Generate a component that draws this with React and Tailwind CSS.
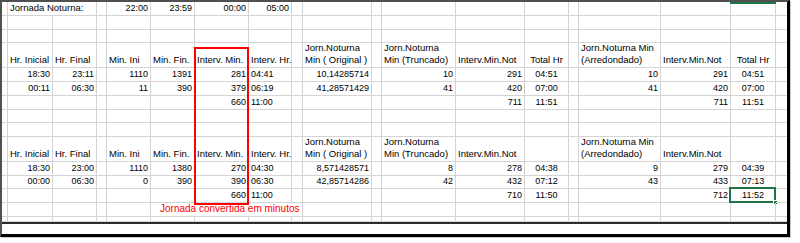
import React from 'react';

// column widths in px, gridline included: A..R, S takes the rest
const COLS =
  'grid-cols-[6px_45px_44px_10px_44px_44px_54px_43px_11px_69px_10px_74px_69px_44px_10px_82px_70px_45px_1fr]';
const ROWS_TPL =
  'grid-rows-[14px_14px_13px_25px_14px_14px_14px_13px_14px_25px_14px_13px_14px_14px_1fr]';

const L = 'l';
const R = 'r';
const C = 'c';

const header = (withTotal) => [
  [1, 'Hr. Inicial', L],
  [2, 'Hr. Final', L],
  [4, 'Min. Ini', L],
  [5, 'Min. Fin.', L],
  [6, 'Interv. Min.', L],
  [7, 'Interv. Hr.', L],
  [9, 'Jorn.Noturna\nMin ( Original )', L],
  [11, 'Jorn.Noturna\nMin (Truncado)', L],
  [12, 'Interv.Min.Not', L],
  ...(withTotal ? [[13, 'Total Hr', C]] : []),
  [15, 'Jorn.Noturna Min\n(Arredondado)', L],
  [16, 'Interv.Min.Not', L],
  ...(withTotal ? [[17, 'Total Hr', C]] : []),
];

const DATA_COLS = [1, 2, 4, 5, 6, 7, 9, 11, 12, 13, 15, 16, 17];
const DATA_ALIGN = { 7: L, 13: C, 17: C };
const dataRow = (vals) =>
  vals
    .map((t, i) => [DATA_COLS[i], t, DATA_ALIGN[DATA_COLS[i]] || R])
    .filter((c) => c[1] !== '');

const ROWS = [
  { cells: [[1, 'Jornada Noturna:', L, 2, true], [4, '22:00', R], [5, '23:59', R], [6, '00:00', R], [7, '05:00', R]] },
  { cells: [] },
  { cells: [] },
  { head: true, cells: header(true) },
  { cells: dataRow(['18:30', '23:11', '1110', '1391', '281', '04:41', '10,14285714', '10', '291', '04:51', '10', '291', '04:51']) },
  { cells: dataRow(['00:11', '06:30', '11', '390', '379', '06:19', '41,28571429', '41', '420', '07:00', '41', '420', '07:00']) },
  { cells: dataRow(['', '', '', '', '660', '11:00', '', '', '711', '11:51', '', '711', '11:51']) },
  { cells: [] },
  { cells: [] },
  { head: true, cells: header(false) },
  { cells: dataRow(['18:30', '23:00', '1110', '1380', '270', '04:30', '8,571428571', '8', '278', '04:38', '9', '279', '04:39']) },
  { cells: dataRow(['00:00', '06:30', '0', '390', '390', '06:30', '42,85714286', '42', '432', '07:12', '43', '433', '07:13']) },
  { cells: dataRow(['', '', '', '', '660', '11:00', '', '', '710', '11:50', '', '712', '11:52']), sel: 17 },
  { cells: [[5, 'Jornada convertida em minutos', 'red', 4]] },
  { cells: [] },
];

const SPAN = { 1: '', 2: 'col-span-2', 4: 'col-span-4' };
const ALIGN = {
  l: 'justify-start text-left',
  r: 'justify-end text-right',
  c: 'justify-center text-center',
  red: 'justify-start text-left pl-[9px]',
};

function Cell({ spec, last, head, selected }) {
  const [, text, align = L, span = 1, label] = spec || [];
  const size = head || label ? 'text-[9.5px]' : align === 'red' ? 'text-[10px] text-[#ff0000]' : 'text-[9px]';
  return (
    <div
      className={`relative flex items-end whitespace-pre px-[2px] leading-[12px] border-b border-[#d4d4d4] ${
        last ? '' : 'border-r'
      } ${SPAN[span]} ${ALIGN[align]} ${size}`}
    >
      {text && <span className="pb-px">{text}</span>}
      {selected && (
        <>
          <div className="absolute -left-[2px] -top-[2px] -right-px -bottom-px border-2 border-[#217346] pointer-events-none" />
          <div className="absolute -right-[3px] -bottom-[3px] w-[5px] h-[5px] bg-[#217346] border border-white" />
        </>
      )}
    </div>
  );
}

export default function App() {
  return (
    <div className="w-[800px] h-[243px] bg-white overflow-hidden text-black font-['Liberation_Sans',Arial,sans-serif]">
      <div className="w-[790px] h-[237px] flex flex-col border-l-2 border-t-2 border-r-[3px] border-b-[3px] border-l-[#505050] border-t-[#505050] border-r-black border-b-black shadow-[1px_1px_0_#c8c8c8]">
        <div className={`relative grid ${COLS} ${ROWS_TPL} h-[220px]`}>
          {ROWS.flatMap((row, ri) => {
            const map = {};
            row.cells.forEach((c) => (map[c[0]] = c));
            const out = [];
            for (let ci = 0; ci < 19; ci++) {
              const spec = map[ci];
              out.push(
                <Cell
                  key={`${ri}-${ci}`}
                  spec={spec}
                  last={ci === 18}
                  head={row.head}
                  selected={row.sel === ci}
                />
              );
              if (spec && spec[3]) ci += spec[3] - 1;
            }
            return out;
          })}
          {/* selected column marker */}
          <div className="absolute left-[728px] top-0 w-[46px] h-[2px] bg-[#217346]" />
          {/* highlight box */}
          <div className="absolute left-[192px] top-[45px] w-[55px] h-[158px] border-2 border-[#ff0000] pointer-events-none" />
        </div>
        <div className="h-[2px] bg-[#2b2b2b]" />
        <div className="flex-1 bg-white" />
      </div>
    </div>
  );
}
